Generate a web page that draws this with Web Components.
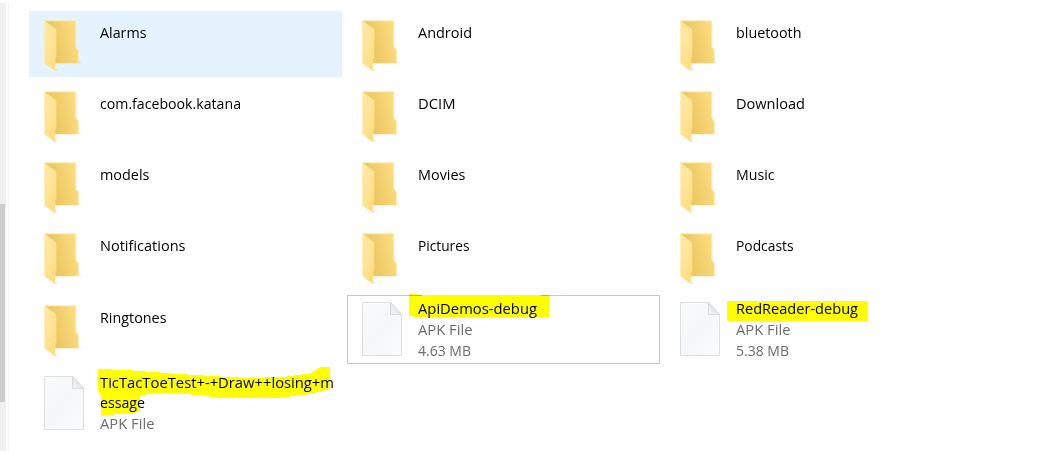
<!DOCTYPE html>
<html lang="en"><head><meta charset="utf-8"><title>Files</title>
<style>body{margin:0;background:#fff}</style></head><body>
<file-browser></file-browser>
<script>
const folder=`<svg width="56" height="66" viewBox="0 -.6 56 66"><defs>
<linearGradient id="b" x1="0" y1=".3" x2="1" y2="0"><stop offset=".2" stop-color="#ecc863"/><stop offset="1" stop-color="#ffe084"/></linearGradient>
<linearGradient id="f" x1="0" y1="0" x2=".5" y2="1"><stop offset="0" stop-color="#ffe8a2"/><stop offset=".55" stop-color="#ffe59a"/><stop offset="1" stop-color="#ffdc80"/></linearGradient></defs>
<path d="M50 51.6l2.5-1-2.5-1zM26 59.6l3.5-1.5-3.5-1z" fill="#777" opacity=".16"/>
<path d="M15.5 9.2H46.8V35.5L49.4 38.5V51.6H25V20z" fill="url(#b)"/>
<path d="M15.5 9.2H46.8V35.5L49.4 38.5V51.6" fill="none" stroke="#ffebaf" stroke-width=".8"/>
<path d="M15.6 9.3L27 18V45.8L26 47V59.3L15.6 51.6z" fill="url(#f)" stroke="#ffe698" stroke-width=".5"/></svg>`;
const sheet=`<svg width="56" height="66" viewBox="0 -1 56 66"><defs><linearGradient id="g" x1="0" y1="0" x2="1" y2="1"><stop offset="0" stop-color="#f9fafa"/><stop offset=".5" stop-color="#f6f7f8"/><stop offset="1" stop-color="#fafbfc"/></linearGradient>
<linearGradient id="c" x1="0" y1="1" x2="1" y2="0"><stop offset="0" stop-color="#f5f5f5"/><stop offset="1" stop-color="#d9d9d9"/></linearGradient></defs>
<path d="M15.5 5.5H43.5L54.5 17.5V58.5H15.5z" fill="url(#g)" stroke="#dedfe0"/>
<path d="M43.5 5.5V17.5H54.5z" fill="url(#c)" stroke="#d2d3d4" stroke-width=".8"/></svg>`;
customElements.define('item-icon',class extends HTMLElement{
 connectedCallback(){this.attachShadow({mode:'open'}).innerHTML=`<style>:host{display:block;flex:none;width:56px;height:66px}svg{display:block}</style>${this.getAttribute('kind')==='file'?sheet:folder}`}
});
customElements.define('text-line',class extends HTMLElement{
 connectedCallback(){
  const r=this.attachShadow({mode:'open'});
  r.innerHTML=`<style>:host{display:block;height:21px;white-space:nowrap}:host([tight]){height:20px}span{display:inline-block;transform-origin:0 50%}</style><span><slot></slot></span>`;
  const s=r.querySelector('span'),w=+this.getAttribute('width'),n=s.getBoundingClientRect().width;
  if(w&&n)s.style.transform=`scaleX(${w/n})`;
 }
});
customElements.define('marker-stroke',class extends HTMLElement{
 connectedCallback(){this.attachShadow({mode:'open'}).innerHTML=`<style>:host{position:absolute;left:0;top:0;pointer-events:none;mix-blend-mode:multiply}:host([solid]){mix-blend-mode:normal}svg{display:block;overflow:visible}</style><svg width="313" height="69" shape-rendering="crispEdges"><path fill="#ff0" d="${this.getAttribute('path')}"/></svg>`}
});
customElements.define('file-tile',class extends HTMLElement{
 connectedCallback(){this.attachShadow({mode:'open'}).innerHTML=`<style>
:host{display:flex;align-items:flex-start;position:relative;box-sizing:border-box;font:15px/21px "Open Sans","Noto Sans",sans-serif;color:#000}
:host([tall]){padding-top:1px}
:host([hovered]){background:#e5f3ff}
:host([focused]){box-shadow:inset 0 0 0 1px #99d1ff}
.t{margin-left:15px;padding-top:11px}
:host([kind=file]) .t{padding-top:2px}
::slotted([muted]){color:#6d6d6d}
</style><item-icon kind="${this.getAttribute('kind')||'folder'}"></item-icon><div class="t"><slot></slot></div><slot name="marker"></slot>`}
});
customElements.define('scroll-rail',class extends HTMLElement{
 connectedCallback(){this.attachShadow({mode:'open'}).innerHTML=`<style>:host{display:block;box-sizing:border-box;width:6px;height:448px;background:#f0f0f0;padding-top:201px}div{width:5px;height:198px;background:#cdcdcd}</style><div></div>`}
});
customElements.define('file-browser',class extends HTMLElement{
 connectedCallback(){
  const f=(n,w,a='')=>`<file-tile ${a}><text-line width="${w}">${n}</text-line></file-tile>`;
  const d=(lines,p,a='',solid='')=>`<file-tile kind="file" tall ${a}>${lines.map(([t,w,m=''])=>`<text-line width="${w}" ${m}>${t}</text-line>`).join('')}<marker-stroke slot="marker" path="${p}"></marker-stroke>${solid?`<marker-stroke slot="marker" solid path="${solid}"></marker-stroke>`:''}</file-tile>`;
  this.attachShadow({mode:'open'}).innerHTML=`<style>
:host{display:flex;height:454px;box-sizing:border-box;padding-top:3px;overflow:hidden}
.pane{box-sizing:border-box;height:448px;margin-left:2px;border-left:1px solid #f5f5f5;padding:8px 0 0 20px}
.grid{display:grid;grid-template-columns:repeat(3,313px);column-gap:5px;row-gap:5px;grid-template-rows:repeat(4,66px) 69px 69px}
</style><scroll-rail></scroll-rail><div class="pane"><div class="grid">
${f('Alarms',46.5,'hovered')}${f('Android',54)}${f('bluetooth',65.5)}
${f('com.facebook.katana',141)}${f('DCIM',37.5)}${f('Download',69)}
${f('models',49.5)}${f('Movies',47.5)}${f('Music',38.5)}
${f('Notifications',85.5)}${f('Pictures',51.5)}${f('Podcasts',57.5)}
${f('Ringtones',66.5,'tall')}
${d([['ApiDemos-debug',119],['APK File',54.5,'muted'],['4.63 MB',53,'muted']],'M62 -1H70V0H202V22H67V21H62Z','focused','M75 0H194V1H75Z')}
${d([['RedReader-debug',122],['APK File',54.5,'muted'],['5.38 MB',53,'muted']],'M62 6H203V26H62Z')}
${d([['TicTacToeTest+-+Draw++losing+m',234,'tight'],['essage',45],['APK File',54.5,'muted']],'M69 0L97 1L151 5L217 9L255 8L282 4L292 -2H301V20L281 25L247 29H191L171 26L133 24L111 26V43L95 45L72 46V28L69 21Z')}
</div></div>`}
});
</script></body></html>
